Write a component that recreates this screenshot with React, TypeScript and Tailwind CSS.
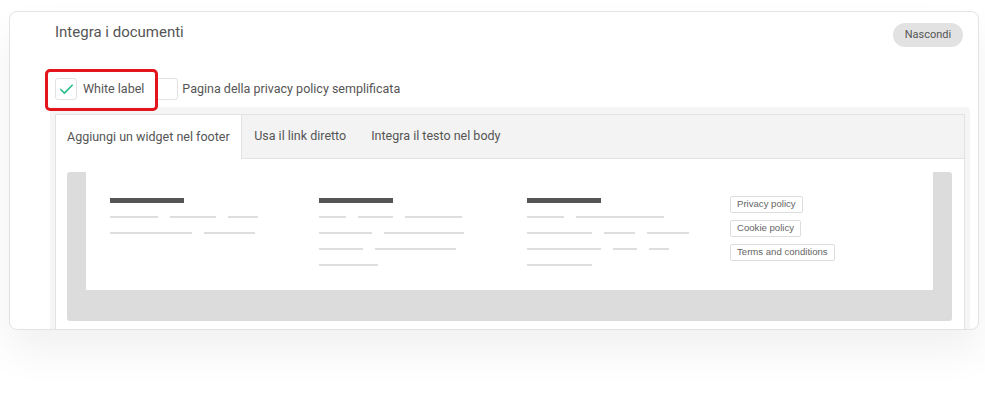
import { Check } from 'lucide-react';

const font = { fontFamily: 'Roboto, "Noto Sans", sans-serif' };

// widths of the pale placeholder lines, per column and row
const columns: number[][][] = [
  [[48, 46, 30], [82, 51]],
  [[27, 35, 57], [53, 80], [44, 81], [59]],
  [[37, 88], [65, 31, 42], [74, 24, 20], [65]],
];

const footerLinks = ['Privacy policy', 'Cookie policy', 'Terms and conditions'];

function FooterPreview() {
  return (
    <div className="bg-[#dcdcdc] rounded-[3px] px-[19px] pb-[31px]">
      <div className="h-[118px] bg-white pl-[24px] pt-[26px] grid grid-cols-[209px_208px_203px_auto]">
        {columns.map((rows, ci) => (
          <div key={ci} className="flex flex-col">
            <div className="h-[5px] w-[74px] bg-[#555555] mb-[13px]" />
            <div className="flex flex-col gap-[14px]">
              {rows.map((row, ri) => (
                <div key={ri} className="flex gap-[12px]">
                  {row.map((w, i) => (
                    <div key={i} className="h-[2px] bg-[#dedede]" style={{ width: w }} />
                  ))}
                </div>
              ))}
            </div>
          </div>
        ))}
        <div className="flex flex-col items-start gap-[7px] -mt-[2px]">
          {footerLinks.map((l) => (
            <span
              key={l}
              className="h-[17px] px-[6px] flex items-center border border-[#dddddd] rounded-[2px] text-[9.6px] text-[#666666] font-['Liberation_Sans',Arial,sans-serif]"
            >
              {l}
            </span>
          ))}
        </div>
      </div>
    </div>
  );
}

export default function App() {
  const tabs = ['Aggiungi un widget nel footer', 'Usa il link diretto', 'Integra il testo nel body'];

  return (
    <div className="w-[985px] h-[395px] bg-white pt-[11px]" style={font}>
      <div className="w-[970px] h-[319px] ml-[9px] rounded-[8px] border border-[#e3e3e3] bg-white overflow-hidden shadow-[0_22px_40px_rgba(0,0,0,0.06)]">
        <div className="pl-[40px] pr-[8px]">
          {/* Header */}
          <div className="flex justify-between items-start pt-[11px]">
            <h2 className="ml-[5px] text-[15px] leading-[18px] text-[#555555]">Integra i documenti</h2>
            <button className="mr-[7px] h-[24px] w-[70px] rounded-full bg-[#e2e2e2] text-[11px] text-[#555555]">
              Nascondi
            </button>
          </div>

          {/* Options */}
          <div className="relative mt-[31px] ml-[5px] flex items-center h-[22px] text-[12.5px] text-[#555555]">
            <span className="w-[22px] h-[22px] rounded-[3px] border border-[#e2e2e2] flex items-center justify-center">
              <Check className="w-[17px] h-[17px] text-[#2fbf8c]" strokeWidth={2.4} />
            </span>
            <span className="ml-[6px]">White label</span>
            <span className="ml-[12px] w-[22px] h-[22px] rounded-[3px] border border-[#e2e2e2]" />
            <span className="ml-[4px]">Pagina della privacy policy semplificata</span>
            {/* highlight */}
            <div className="absolute -left-[10px] -top-[9px] w-[113px] h-[42px] border-[3px] border-[#e3141b] rounded-[5px]" />
          </div>

          {/* Tabs */}
          <div className="mt-[7px] bg-[#f5f5f5] rounded-[4px] px-[5px] pt-[7px]">
            <div className="bg-white border border-[#e2e2e2]">
              <div className="flex h-[44px] bg-[#f3f3f3] text-[12.5px] text-[#555555]">
                {tabs.map((t, i) => (
                  <div
                    key={t}
                    className={
                      i === 0
                        ? 'px-[11px] flex items-center bg-white border-r border-[#e2e2e2]'
                        : 'px-[12.5px] flex items-center border-b border-[#e2e2e2]'
                    }
                  >
                    {t}
                  </div>
                ))}
                <div className="flex-1 border-b border-[#e2e2e2]" />
              </div>
              <div className="pl-[11px] pr-[12px] pt-[13px] pb-[12px]">
                <FooterPreview />
              </div>
            </div>
          </div>
        </div>
      </div>
    </div>
  );
}
